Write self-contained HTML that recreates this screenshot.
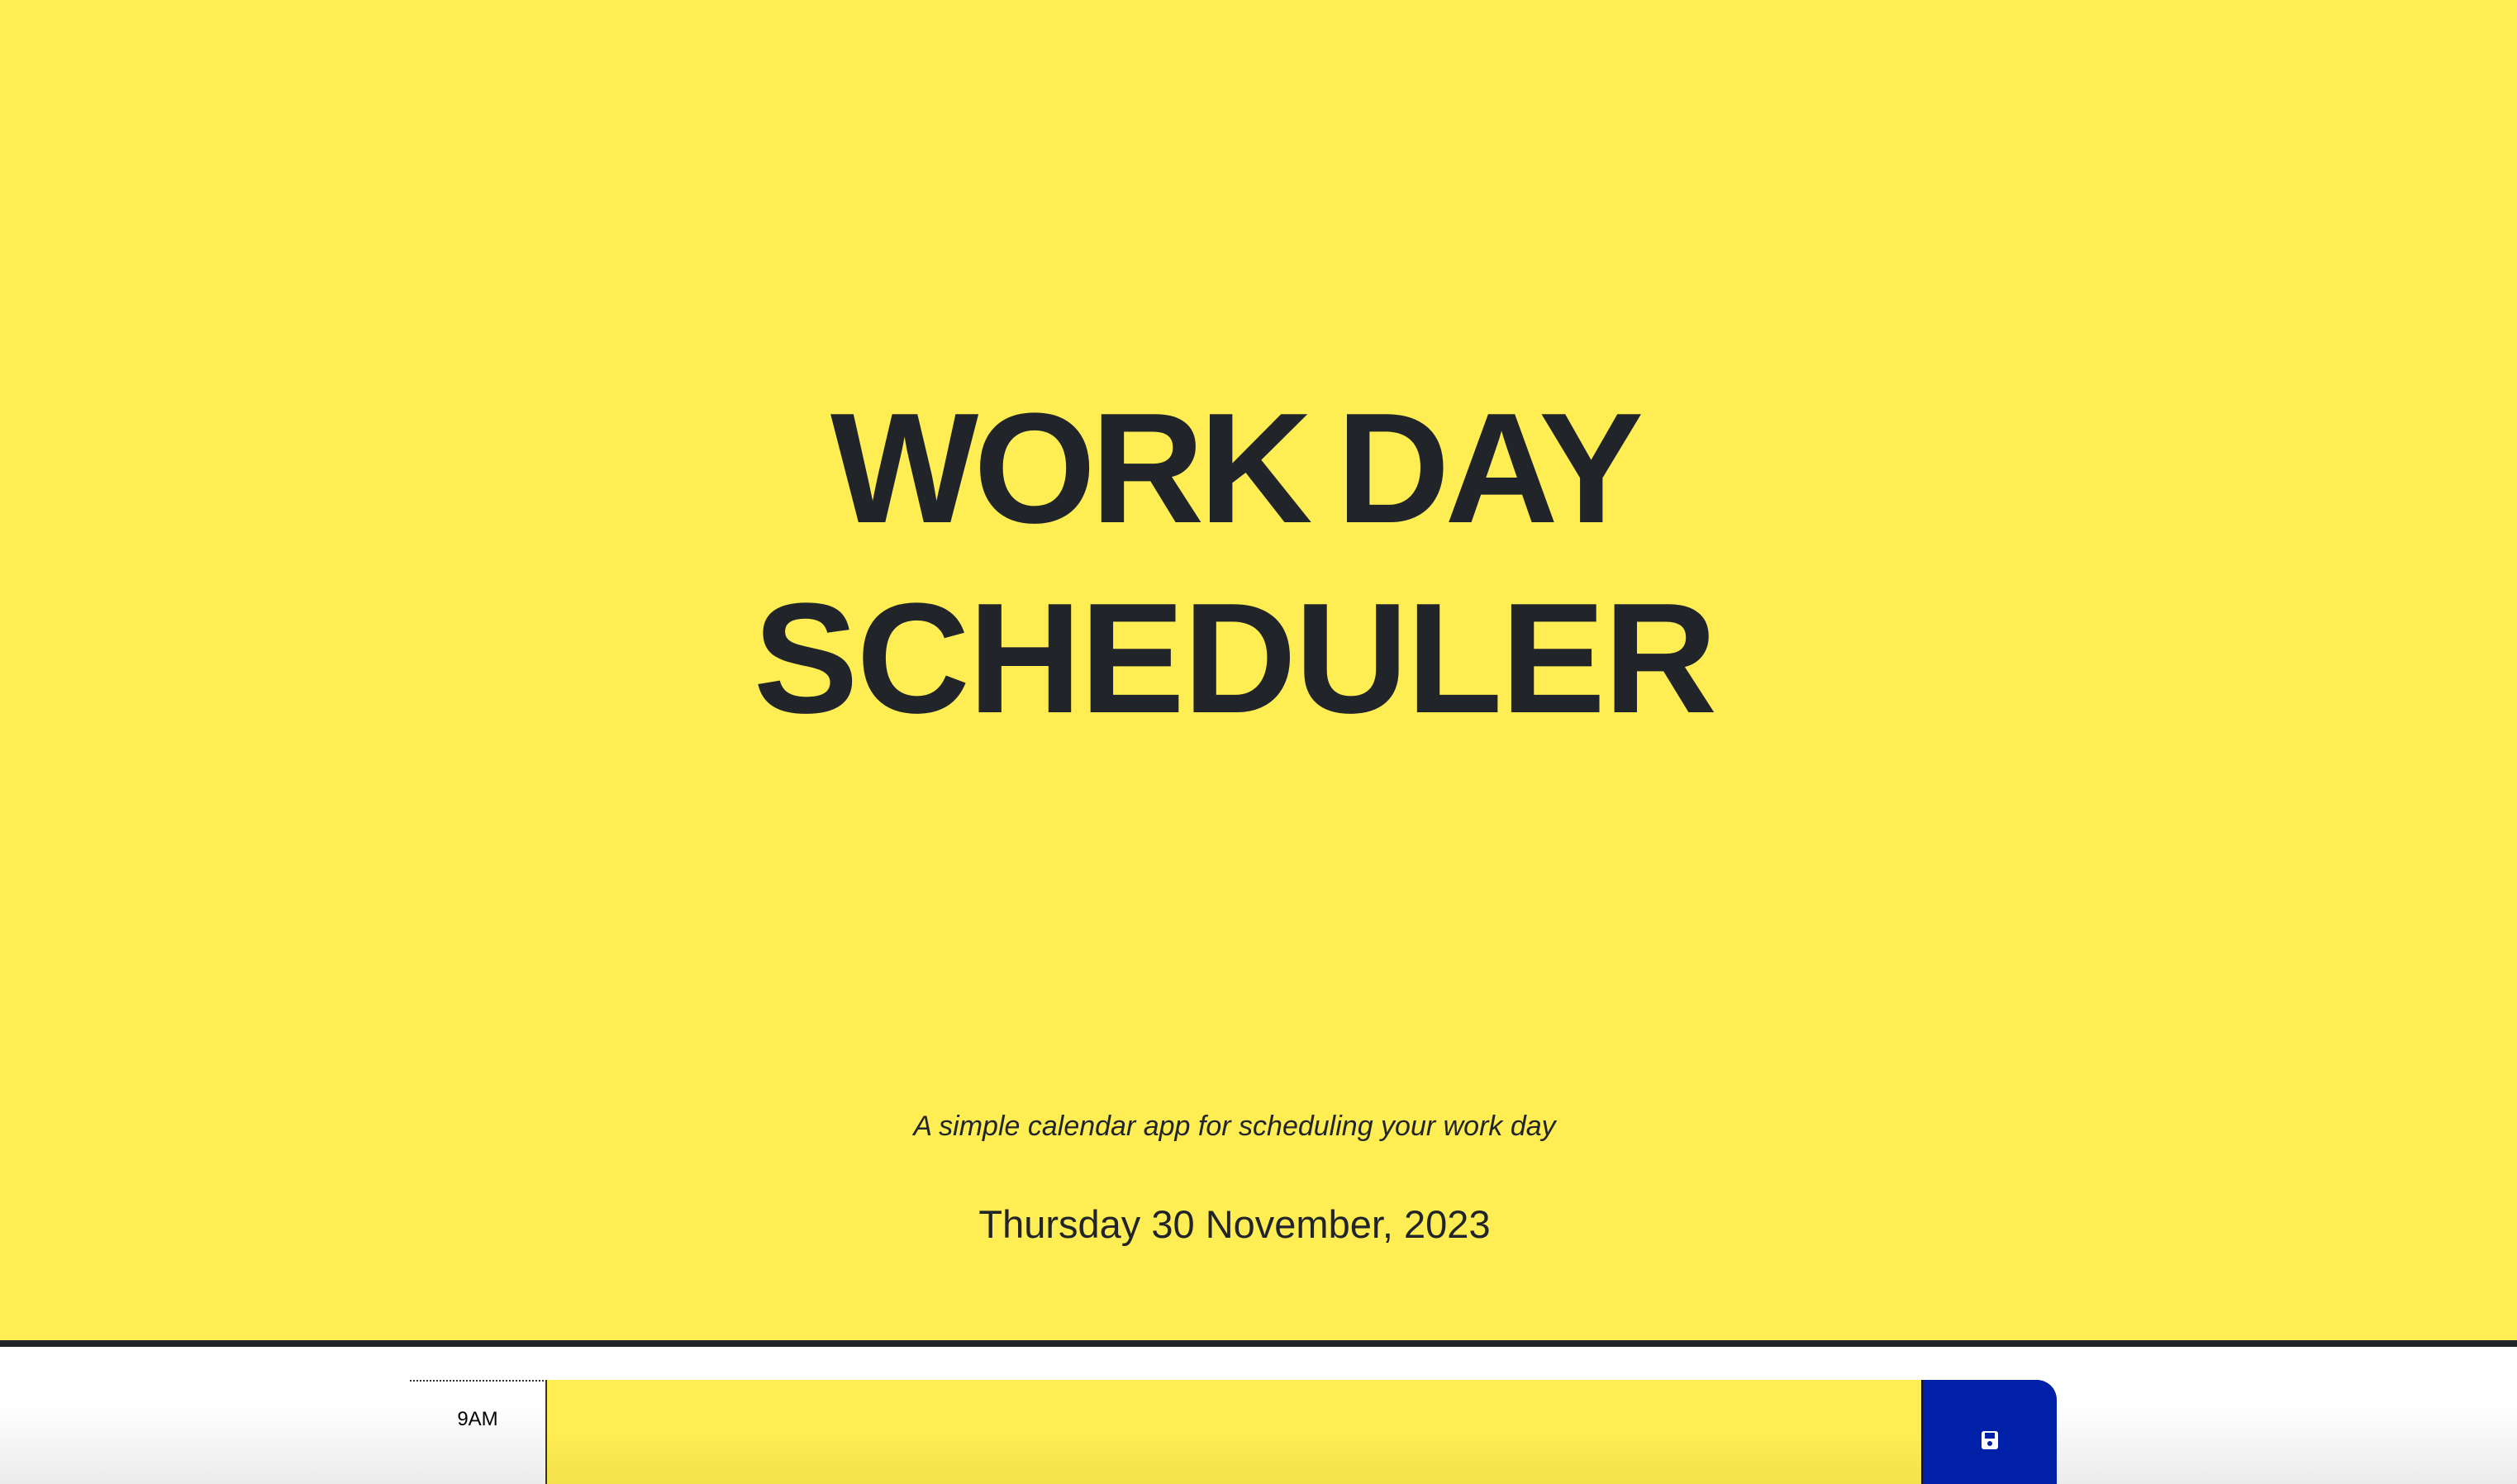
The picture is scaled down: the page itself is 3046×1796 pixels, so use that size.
<!DOCTYPE html>
<html><head><meta charset="utf-8"><style>
html,body{margin:0;padding:0;width:3046px;height:1796px;overflow:hidden;background:#fff;font-family:"Liberation Sans",sans-serif;color:#212529}
.hdr{position:absolute;left:0;top:0;width:3046px;height:1622px;background:#feed53;border-bottom:8px solid #212529}
h1{position:absolute;left:0;width:2988px;margin:0;text-align:center;font-weight:bold;font-size:190px;line-height:230px;top:452px;word-spacing:-12px}
h1 .a{letter-spacing:-6px}
h1 .b{letter-spacing:-2px}
.sub{position:absolute;top:1344px;width:2988px;text-align:center;font-style:italic;font-size:34px}
.date{position:absolute;top:1454px;width:2988px;text-align:center;font-size:47px}
.fade{position:absolute;left:0;top:1700px;width:3046px;height:96px;background:linear-gradient(#fff,#ececec)}
.hour{position:absolute;left:496px;top:1670px;width:166px;height:126px;border-top:2px dotted #333;border-right:2px solid #333;box-sizing:border-box;font-size:24px;text-align:center;padding-top:32px;color:#000}
.ta{position:absolute;left:662px;top:1670px;width:1663px;height:126px;background:linear-gradient(#feed53 50%,#f3e24c)}
.btn{position:absolute;left:2325px;top:1670px;width:164px;height:126px;background:#0020a8;border-top-right-radius:24px;border-left:2px solid #111;box-sizing:border-box}
</style></head><body>
<div class="hdr">
<h1><span class="a">WORK DAY</span><br><span class="b">SCHEDULER</span></h1>
<div class="sub">A simple calendar app for scheduling your work day</div>
<div class="date">Thursday 30 November, 2023</div>
</div>
<div class="fade"></div>
<div class="hour">9AM</div>
<div class="ta"></div>
<div class="btn"><svg style="position:absolute;left:71px;top:62px" width="20" height="22" viewBox="0 0 20 22"><rect x="0" y="0" width="20" height="22" rx="3" fill="#fff"/><rect x="4" y="2" width="12" height="7" fill="#0020a8"/><circle cx="10" cy="15" r="3" fill="#0020a8"/></svg></div>
</body></html>
